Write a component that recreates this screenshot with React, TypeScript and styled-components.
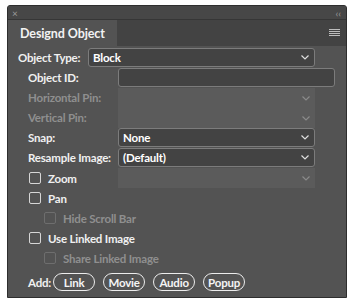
import React from "react";
import styled, { createGlobalStyle } from "styled-components";

const GlobalStyle = createGlobalStyle`
  body {
    margin: 0;
    background: #ffffff;
    font-family: Lato, "Liberation Sans", sans-serif;
  }
`;

const Panel = styled.div`
  margin: 5px 0 0 7px;
  width: 338px;
  height: 291px;
  border: 1px solid #2e2e2e;
  border-radius: 3px 3px 0 0;
  background: #535353;
  display: flex;
  flex-direction: column;
  overflow: hidden;
`;

const TopStrip = styled.div`
  height: 13px;
  background: #474747;
  border-bottom: 1px solid #363636;
  display: flex;
  align-items: center;
  justify-content: space-between;
  padding: 0 5px 0 4px;
  color: #9c9c9c;
  font-size: 10px;
  line-height: 1;
`;

const TabRow = styled.div`
  height: 26px;
  background: #434343;
  display: flex;
  align-items: stretch;
  justify-content: space-between;
`;

const Tab = styled.div`
  width: 97px;
  padding-left: 12px;
  background: #535353;
  color: #f2f2f2;
  font-size: 12.5px;
  font-weight: 700;
  letter-spacing: -0.1px;
  display: flex;
  align-items: center;
`;

const MenuButton = styled.div`
  display: flex;
  align-items: center;
  padding-right: 6px;
`;

const Content = styled.div`
  display: flex;
  flex-direction: column;
  padding: 2px 0 0 10px;
  font-size: 11.5px;
  font-weight: 700;
  letter-spacing: -0.2px;
`;

const Row = styled.div`
  height: 20px;
  display: flex;
  align-items: flex-start;
`;

const Label = styled.span<{ $indent: number; $width: number; $disabled?: boolean }>`
  box-sizing: border-box;
  width: ${(p) => p.$width}px;
  padding-left: ${(p) => p.$indent}px;
  flex-shrink: 0;
  height: 20px;
  line-height: 20px;
  color: ${(p) => (p.$disabled ? "#8f8f8f" : "#f0f0f0")};
  white-space: nowrap;
`;

const Select = styled.div<{ $width: number }>`
  box-sizing: border-box;
  width: ${(p) => p.$width}px;
  height: 19px;
  background: #434343;
  border: 1px solid #7c7c7c;
  border-radius: 3px;
  display: flex;
  align-items: center;
  justify-content: space-between;
  padding: 0 5px 0 4px;
  color: #ffffff;
`;

const DisabledSelect = styled.div<{ $width: number }>`
  width: ${(p) => p.$width}px;
  height: 20px;
  background: #5b5b5b;
  display: flex;
  align-items: center;
  justify-content: flex-end;
  padding-right: 5px;
  box-sizing: border-box;
`;

const TextInput = styled.div<{ $width: number }>`
  box-sizing: border-box;
  width: ${(p) => p.$width}px;
  height: 19px;
  background: #434343;
  border: 1px solid #7c7c7c;
  border-radius: 3px;
`;

const CheckRow = styled.label<{ $indent: number; $disabled?: boolean }>`
  height: 20px;
  display: flex;
  align-items: center;
  gap: 7px;
  padding-left: ${(p) => p.$indent}px;
  color: ${(p) => (p.$disabled ? "#8f8f8f" : "#f0f0f0")};
  white-space: nowrap;
`;

const Box = styled.span<{ $disabled?: boolean }>`
  box-sizing: border-box;
  width: 12px;
  height: 12px;
  border: 1px solid ${(p) => (p.$disabled ? "#6e6e6e" : "#d6d6d6")};
  border-radius: 2px;
  flex-shrink: 0;
`;

const CheckWithField = styled.div`
  display: flex;
  align-items: center;
  height: 20px;
`;

const CheckCell = styled.div`
  width: 100px;
`;

const AddRow = styled.div`
  margin-top: 4px;
  height: 20px;
  display: flex;
  align-items: center;
  gap: 8px;
  padding-left: 10px;
`;

const AddLabel = styled.span`
  color: #f0f0f0;
  margin-right: -6px;
`;

const Pill = styled.button`
  box-sizing: border-box;
  width: 42px;
  height: 18px;
  border: 1.5px solid #ececec;
  border-radius: 10px;
  background: transparent;
  color: #f4f4f4;
  font-family: inherit;
  font-size: 11.5px;
  font-weight: 700;
  letter-spacing: -0.2px;
  padding: 0;
  display: flex;
  align-items: center;
  justify-content: center;
`;

const Chevron = ({ dim }: { dim?: boolean }) => (
  <svg width="8" height="5" viewBox="0 0 8 5">
    <polyline
      points="0.5,0.5 4,4 7.5,0.5"
      fill="none"
      stroke={dim ? "#8a8a8a" : "#dedede"}
      strokeWidth="1.2"
    />
  </svg>
);

const MenuIcon = () => (
  <svg width="11" height="8" viewBox="0 0 11 8">
    {[0.5, 2.5, 4.5, 6.5].map((y) => (
      <line key={y} x1="0" x2="11" y1={y} y2={y} stroke="#bdbdbd" strokeWidth="1" />
    ))}
  </svg>
);

const CheckItem = ({
  label,
  indent,
  disabled,
}: {
  label: string;
  indent: number;
  disabled?: boolean;
}) => (
  <CheckRow $indent={indent} $disabled={disabled}>
    <Box $disabled={disabled} />
    {label}
  </CheckRow>
);

const App = () => {
  return (
    <>
      <GlobalStyle />
      <Panel>
        <TopStrip>
          <span>×</span>
          <span>‹‹</span>
        </TopStrip>
        <TabRow>
          <Tab>Designd Object</Tab>
          <MenuButton>
            <MenuIcon />
          </MenuButton>
        </TabRow>
        <Content>
          <Row>
            <Label $indent={0} $width={70}>Object Type:</Label>
            <Select $width={227}>
              Block
              <Chevron />
            </Select>
          </Row>
          <Row>
            <Label $indent={10} $width={100}>Object ID:</Label>
            <TextInput $width={217} />
          </Row>
          <Row>
            <Label $indent={10} $width={100} $disabled>Horizontal Pin:</Label>
            <DisabledSelect $width={197}>
              <Chevron dim />
            </DisabledSelect>
          </Row>
          <Row>
            <Label $indent={10} $width={100} $disabled>Vertical Pin:</Label>
            <DisabledSelect $width={197}>
              <Chevron dim />
            </DisabledSelect>
          </Row>
          <Row>
            <Label $indent={10} $width={100}>Snap:</Label>
            <Select $width={197}>
              None
              <Chevron />
            </Select>
          </Row>
          <Row>
            <Label $indent={10} $width={100}>Resample Image:</Label>
            <Select $width={197}>
              (Default)
              <Chevron />
            </Select>
          </Row>
          <CheckWithField>
            <CheckCell>
              <CheckItem label="Zoom" indent={11} />
            </CheckCell>
            <DisabledSelect $width={197}>
              <Chevron dim />
            </DisabledSelect>
          </CheckWithField>
          <CheckItem label="Pan" indent={11} />
          <CheckItem label="Hide Scroll Bar" indent={26} disabled />
          <CheckItem label="Use Linked Image" indent={11} />
          <CheckItem label="Share Linked Image" indent={26} disabled />
          <AddRow>
            <AddLabel>Add:</AddLabel>
            <Pill>Link</Pill>
            <Pill>Movie</Pill>
            <Pill>Audio</Pill>
            <Pill>Popup</Pill>
          </AddRow>
        </Content>
      </Panel>
    </>
  );
};

export default App;
